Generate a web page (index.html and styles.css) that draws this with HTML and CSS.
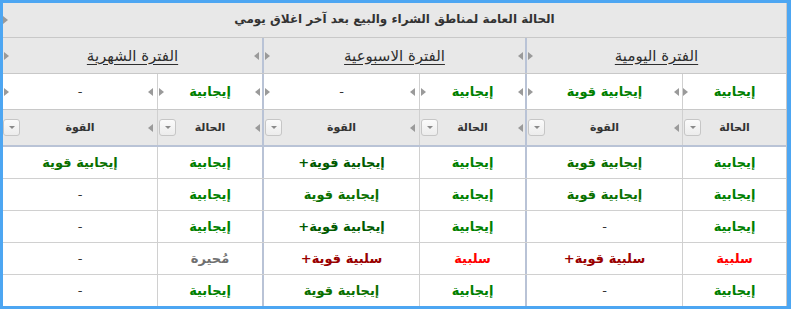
FILE: index.html
```html
<!DOCTYPE html>
<html lang="ar" dir="rtl">
<head>
<meta charset="utf-8">
<link rel="stylesheet" href="styles.css">
</head>
<body>
<div class="frame">
  <div class="grid">
    <div class="row title-row">
      <div class="cell title"><span class="tri r"></span>الحالة العامة لمناطق الشراء والبيع بعد آخر اغلاق يومي</div>
    </div>
    <div class="row group-row">
      <div class="cell gsep"><span class="tri l"></span><span class="tri r"></span><span class="gtitle">الفترة اليومية</span></div>
      <div class="cell gsep"><span class="tri l"></span><span class="tri r"></span><span class="gtitle">الفترة الاسبوعية</span></div>
      <div class="cell"><span class="tri l"></span><span class="tri r"></span><span class="gtitle">الفترة الشهرية</span></div>
    </div>
    <div class="row cols filter-row">
      <div class="cell"><span class="tri l"></span><span class="tri r"></span><span class="pos">إيجابية</span></div>
      <div class="cell gsep"><span class="tri l"></span><span class="tri r"></span><span class="pos">إيجابية قوية</span></div>
      <div class="cell"><span class="tri l"></span><span class="tri r"></span><span class="pos">إيجابية</span></div>
      <div class="cell gsep"><span class="tri l"></span><span class="tri r"></span><span class="dash">-</span></div>
      <div class="cell"><span class="tri l"></span><span class="tri r"></span><span class="pos">إيجابية</span></div>
      <div class="cell"><span class="tri l"></span><span class="tri r"></span><span class="dash">-</span></div>
    </div>
    <div class="row cols head-row">
      <div class="cell"><span class="tri l"></span><span class="dd"></span>الحالة</div>
      <div class="cell gsep"><span class="tri l"></span><span class="dd"></span>القوة</div>
      <div class="cell"><span class="tri l"></span><span class="dd"></span>الحالة</div>
      <div class="cell gsep"><span class="tri l"></span><span class="dd"></span>القوة</div>
      <div class="cell"><span class="tri l"></span><span class="dd"></span>الحالة</div>
      <div class="cell"><span class="dd"></span>القوة</div>
    </div>
    <div class="body">
      <div class="row cols data-row">
        <div class="cell pos">إيجابية</div>
        <div class="cell gsep strong">إيجابية قوية</div>
        <div class="cell pos">إيجابية</div>
        <div class="cell gsep strongp">إيجابية قوية+</div>
        <div class="cell pos">إيجابية</div>
        <div class="cell strong">إيجابية قوية</div>
      </div>
      <div class="row cols data-row">
        <div class="cell pos">إيجابية</div>
        <div class="cell gsep strong">إيجابية قوية</div>
        <div class="cell pos">إيجابية</div>
        <div class="cell gsep strong">إيجابية قوية</div>
        <div class="cell pos">إيجابية</div>
        <div class="cell dash">-</div>
      </div>
      <div class="row cols data-row">
        <div class="cell pos">إيجابية</div>
        <div class="cell gsep dash">-</div>
        <div class="cell pos">إيجابية</div>
        <div class="cell gsep strongp">إيجابية قوية+</div>
        <div class="cell pos">إيجابية</div>
        <div class="cell dash">-</div>
      </div>
      <div class="row cols data-row">
        <div class="cell neg">سلبية</div>
        <div class="cell gsep negp">سلبية قوية+</div>
        <div class="cell neg">سلبية</div>
        <div class="cell gsep negp">سلبية قوية+</div>
        <div class="cell mixed">مُحيرة</div>
        <div class="cell dash">-</div>
      </div>
      <div class="row cols data-row">
        <div class="cell pos">إيجابية</div>
        <div class="cell gsep dash">-</div>
        <div class="cell pos">إيجابية</div>
        <div class="cell gsep strong">إيجابية قوية</div>
        <div class="cell pos">إيجابية</div>
        <div class="cell dash">-</div>
      </div>
    </div>
  </div>
</div>
</body>
</html>
```
FILE: styles.css
```css
* { box-sizing: border-box; }
html, body { margin: 0; padding: 0; }
body {
  background: #4da6f2;
  font-family: "DejaVu Sans", sans-serif;
  color: #333;
}
.frame {
  width: 791px;
  height: 309px;
  border-style: solid;
  border-color: #4da6f2;
  border-width: 3px 4px 3px 3px;
  background: #fff;
  overflow: hidden;
}
.grid {
  width: 784px;
  height: 303px;
  border-right: 1px solid #c8c8c8;
  overflow: hidden;
  direction: rtl;
}
.row {
  display: grid;
  direction: rtl;
}
.cell {
  position: relative;
  display: flex;
  align-items: center;
  justify-content: center;
  white-space: nowrap;
  border-left: 1px solid #d0d0d0;
}
.cell:last-child { border-left: 0; }
.cell.gsep { border-left: 2px solid #b9c3d6; }

.cols { grid-template-columns: 104px 157px 106px 157px 105px 154px; }

.title-row {
  grid-template-columns: 783px;
  height: 35px;
  background: #e8e8e8;
  border-bottom: 1px solid #c8c8c8;
}
.title {
  font-weight: bold;
  font-size: 12px;
  color: #333;
  padding-bottom: 2px;
}
.group-row {
  grid-template-columns: 261px 263px 259px;
  height: 36px;
  background: #e8e8e8;
  border-bottom: 1px solid #c8c8c8;
}
.gtitle {
  font-size: 15px;
  text-decoration: underline;
  text-underline-offset: 3px;
  color: #2e2e2e;
}
.filter-row {
  height: 36px;
  background: #fff;
  border-bottom: 1px solid #c8c8c8;
  font-size: 13px;
  font-weight: bold;
}
.head-row {
  height: 37px;
  background: #e8e8e8;
  border-bottom: 2px solid #b9c3d6;
  font-size: 11px;
  font-weight: bold;
  color: #333;
}
.data-row {
  height: 32px;
  border-bottom: 1px solid #d0d0d0;
  font-size: 13px;
  font-weight: bold;
}

.pos { color: #008000; }
.strong { color: #0a7000; }
.strongp { color: #005a00; }
.neg { color: #ff0000; }
.negp { color: #990000; }
.mixed { color: #707070; }
.dash { color: #333; font-weight: normal; }

.tri {
  position: absolute;
  top: 50%;
  width: 0;
  height: 0;
  margin-top: -4px;
  border-top: 4px solid transparent;
  border-bottom: 4px solid transparent;
  z-index: 2;
}
.tri.r { left: 0; border-left: 5px solid #9a9a9a; }
.cell + .cell .tri.r, .gsep .tri.r { left: 1px; }
.tri.l { left: -9px; border-right: 5px solid #9a9a9a; }
.cell.gsep + .cell .tri.l { left: -10px; }
.title .tri.r { left: 0; }

.dd {
  position: absolute;
  left: 1px;
  top: 50%;
  margin-top: -9px;
  width: 17px;
  height: 17px;
  border: 1px solid #c6c6c6;
  border-radius: 3px;
  background: linear-gradient(#fbfbfb, #ececec);
  z-index: 3;
}
.dd::after {
  content: "";
  position: absolute;
  left: 5px;
  top: 6px;
  border-left: 3px solid transparent;
  border-right: 3px solid transparent;
  border-top: 3px solid #8a8a8a;
}
.head-row .cell:last-child .dd { left: 0; }
```
